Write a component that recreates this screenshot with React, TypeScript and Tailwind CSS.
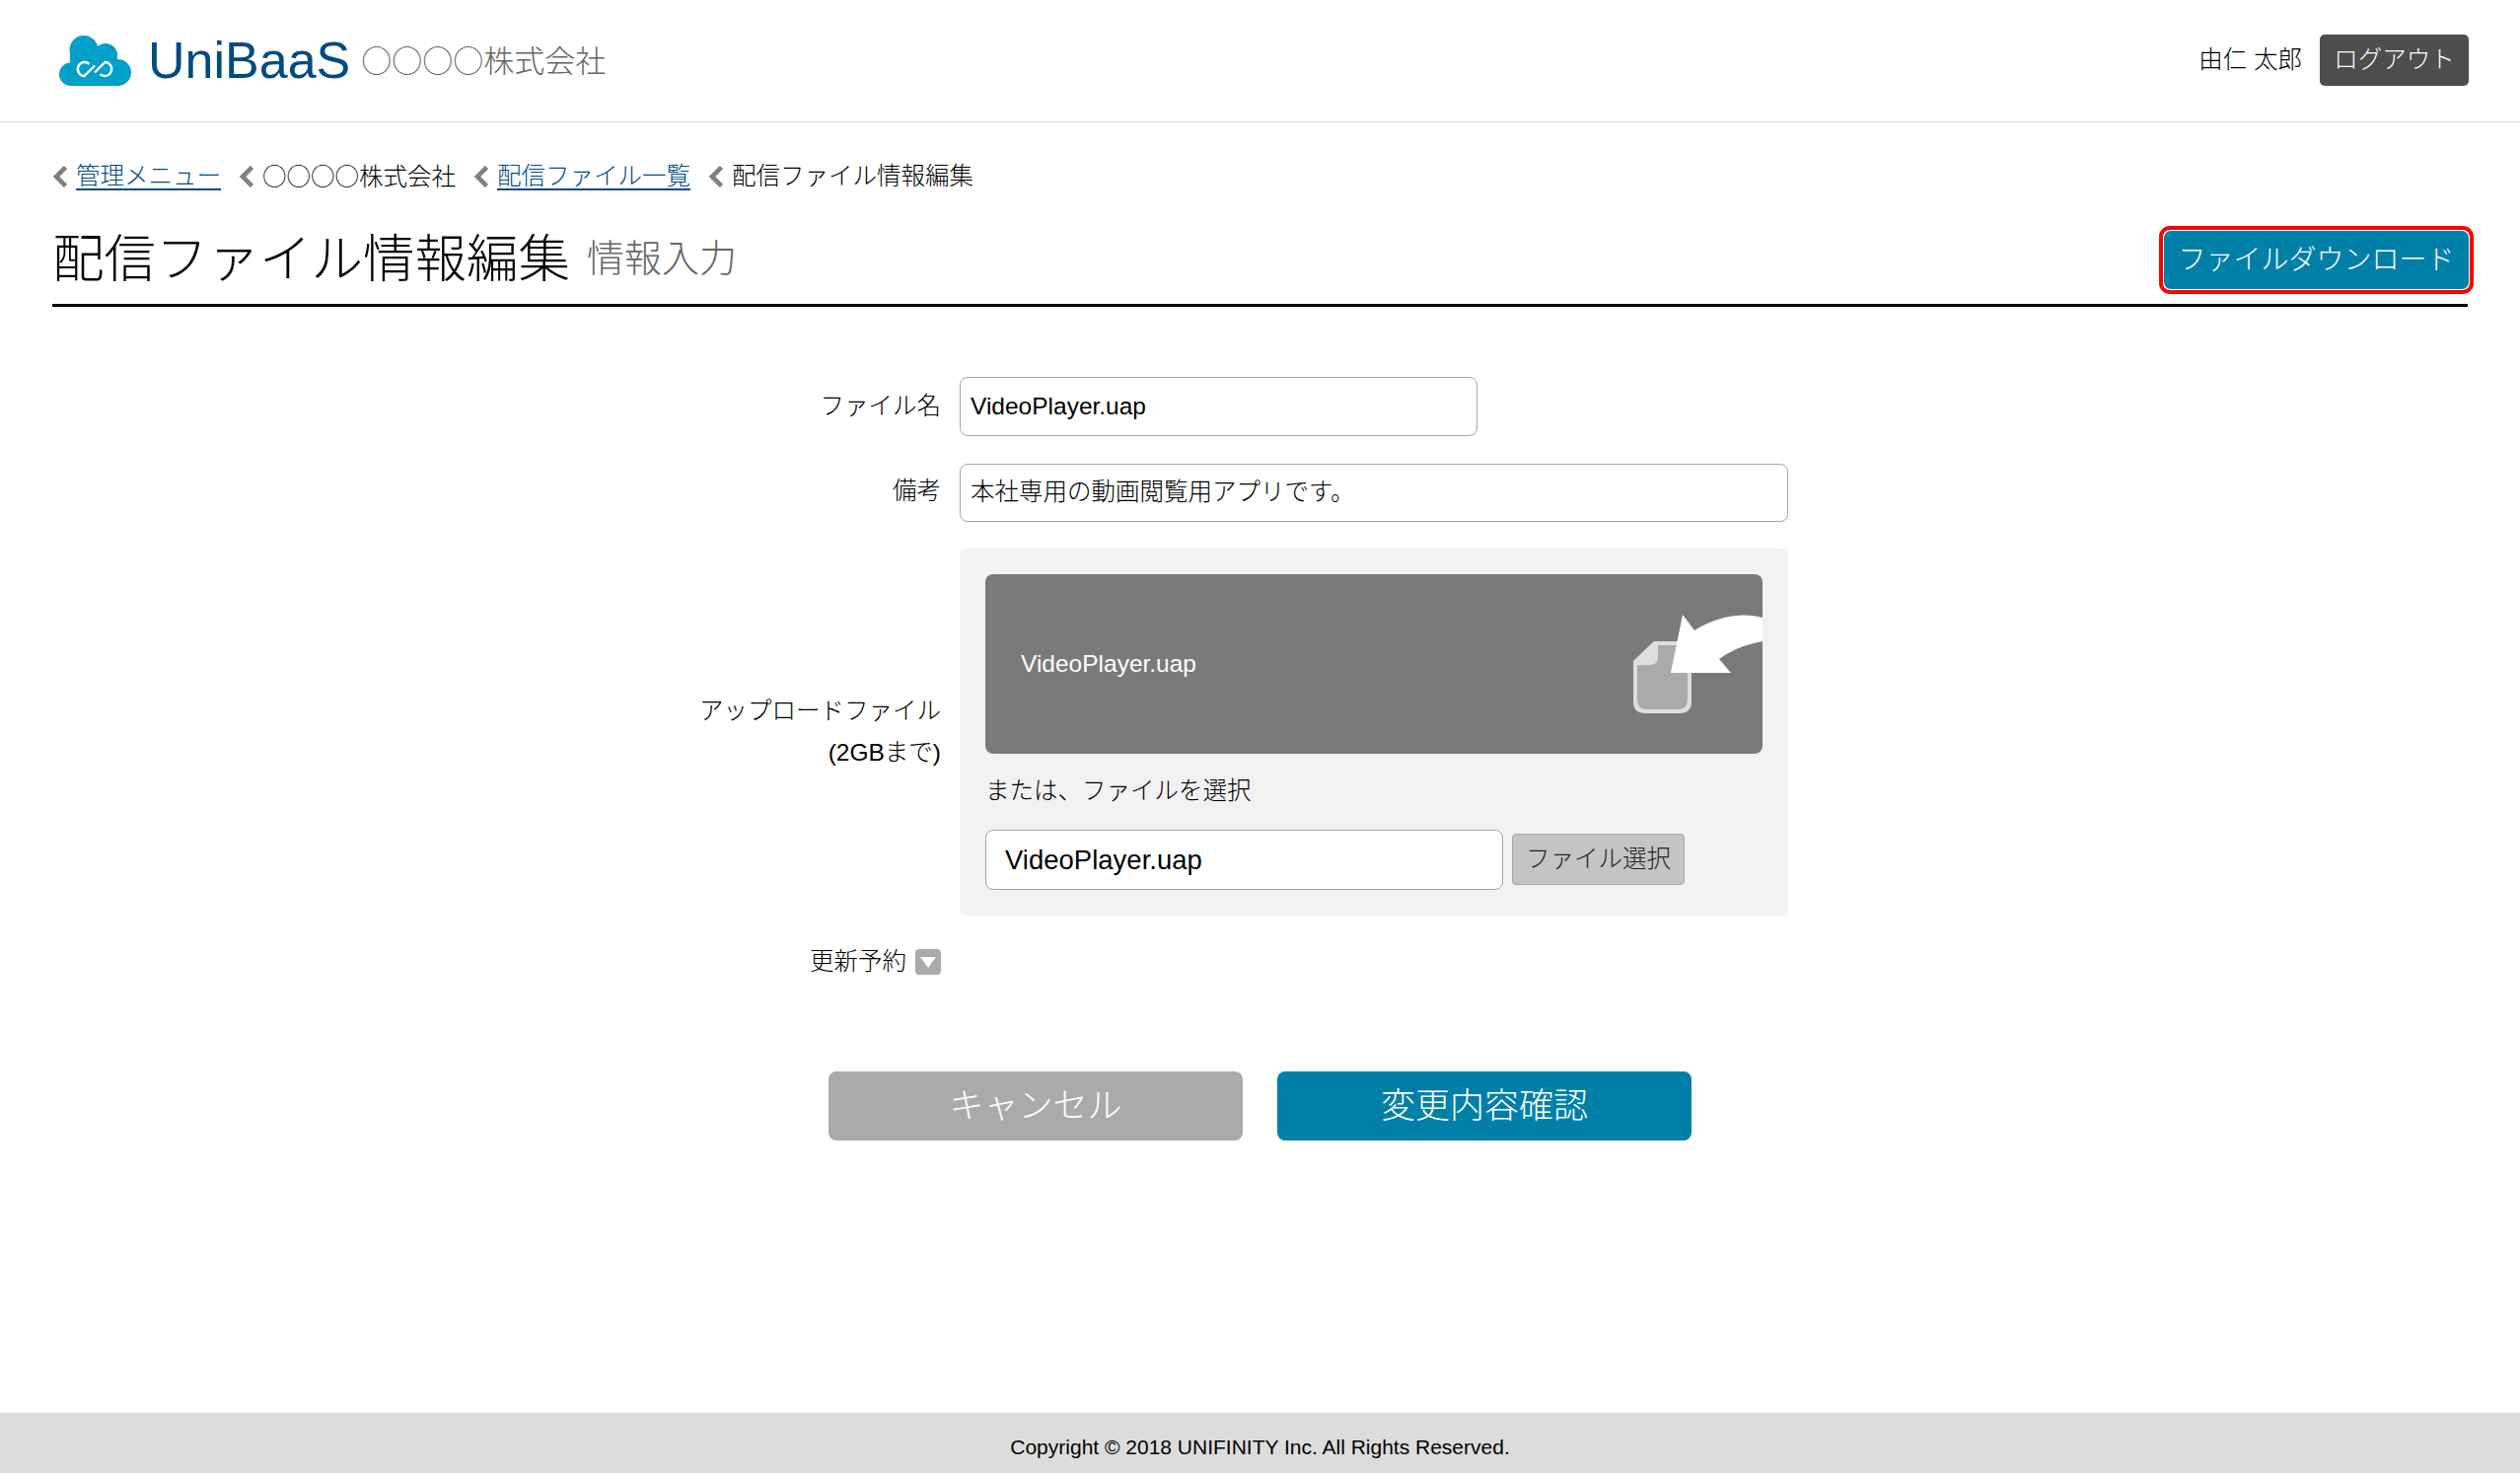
import React from "react";

const font = "font-['Liberation_Sans','Noto_Sans_CJK_JP',sans-serif]";
const cjk = "font-['Noto_Sans_CJK_JP',sans-serif]";

function Chevron() {
  return (
    <svg width="15" height="22" viewBox="0 0 15 22" className="shrink-0 mr-[9px]">
      <path d="M13.5 1.5 L4 11 L13.5 20.5" fill="none" stroke="#808080" strokeWidth="4.6" />
    </svg>
  );
}

function Crumb({ children, link }: { children: React.ReactNode; link?: boolean }) {
  return (
    <div className="flex items-center">
      <Chevron />
      {link ? (
        <a className="text-[#004b80] underline underline-offset-[4px]" href="#">
          {children}
        </a>
      ) : (
        <span>{children}</span>
      )}
    </div>
  );
}

function Label({ children }: { children: React.ReactNode }) {
  return <div className="text-right text-[24.5px] leading-[42px] text-black">{children}</div>;
}

function Logo() {
  return (
    <svg width="73" height="51" viewBox="0 0 73 51" className="shrink-0">
      <g fill="#00a0c8">
        <circle cx="25" cy="14.5" r="14.5" />
        <circle cx="47" cy="20" r="12" />
        <circle cx="59.5" cy="37.5" r="13.5" />
        <circle cx="11.7" cy="39.3" r="11.7" />
        <rect x="11" y="18" width="48" height="33" />
      </g>
      <g fill="none" stroke="#ffffff" strokeWidth="2.4">
        <path d="M30.5 28.8 A7 7 0 1 0 25.5 41 L36 30.5" />
        <path d="M41.5 39.2 A7 7 0 1 0 46.5 27 L36 37.5" />
      </g>
    </svg>
  );
}

function DropIcon() {
  return (
    <svg width="131" height="100" viewBox="0 0 131 100" className="shrink-0">
      <path d="M20.7 27 H48 Q59 27 59 38 V88 Q59 100 47 100 H12 Q0 100 0 88 V47 Z" fill="#dedede" />
      <path d="M25 31 H48 Q55 31 55 38 V86 Q55 96 45 96 H14 Q4 96 4 86 V51 H17 Q25 51 25 43 Z" fill="#aaaaaa" />
      <path d="M50 0 L38 59 H99 L87 45 Q104 32 131 27 V3 Q110 -2 92 3 Q74 8 62 16 Z" fill="#ffffff" />
    </svg>
  );
}

export default function App() {
  return (
    <div className={`${font} flex h-[1493px] flex-col bg-white font-light text-black`}>
      <header className="flex h-[124px] shrink-0 items-center justify-between border-b border-[#dddddd] pl-[60px] pr-[52px]">
        <div className="flex items-center">
          <Logo />
          <span className="mb-[2px] ml-[17px] text-[52px] leading-none text-[#004b80]">UniBaaS</span>
          <span className="mb-[2px] ml-[11px] text-[31px] leading-none text-[#666666]">
            <span className={cjk}>○○○○</span>株式会社
          </span>
        </div>
        <div className="flex items-center">
          <span className="text-[24.5px]">由仁 太郎</span>
          <button className="mb-[1px] ml-[18px] h-[52px] w-[151px] rounded-[5px] bg-[#4d4d4d] text-[24.5px] text-white">
            ログアウト
          </button>
        </div>
      </header>

      <main className="flex-1 px-[53px] pt-[40px]">
        <nav className="flex h-[30px] items-center gap-[18px] text-[24.5px]">
          <Crumb link>管理メニュー</Crumb>
          <Crumb>
            <span className={cjk}>○○○○</span>株式会社
          </Crumb>
          <Crumb link>配信ファイル一覧</Crumb>
          <Crumb>配信ファイル情報編集</Crumb>
        </nav>

        <div className="mt-[35px] flex items-center justify-between border-b-[3px] border-black pb-[10px]">
          <h1 className="flex -translate-y-[1px] items-center">
            <span className="text-[52.5px] leading-[69px]">配信ファイル情報編集</span>
            <span className="ml-[17px] text-[38px] text-[#666666]">情報入力</span>
          </h1>
          <div className="-mr-[6px] h-[69px] w-[319px] rounded-[11px] border-[4px] border-[#ff0000] bg-white p-px">
            <button className="h-full w-full rounded-[7px] bg-[#0080a8] text-[28px] text-white">
              ファイルダウンロード
            </button>
          </div>
        </div>

        <div className="mt-[71px] grid grid-cols-[901px_840px] gap-x-[19px]">
          <div className="self-center"><Label>ファイル名</Label></div>
          <div className="flex h-[60px] w-[525px] items-center rounded-[8px] border border-[#a6a6a6] px-[10px] text-[24.5px]">
            VideoPlayer.uap
          </div>

          <div className="mt-[27px] -translate-y-[1px] self-center"><Label>備考</Label></div>
          <div className="mt-[28px] flex h-[59px] items-center rounded-[8px] border border-[#a6a6a6] px-[10px] text-[24.5px]">
            本社専用の動画閲覧用アプリです。
          </div>

          <div className="mt-[27px] self-center">
            <Label>アップロードファイル</Label>
            <Label>(2GBまで)</Label>
          </div>
          <div className="mt-[27px] h-[372px] rounded-[8px] bg-[#f2f2f2] px-[26px] pt-[26px]">
            <div className="flex h-[182px] items-center justify-between overflow-hidden rounded-[8px] bg-[#7a7a7a] pl-[36px] text-[24.5px] text-white">
              <span>VideoPlayer.uap</span>
              <DropIcon />
            </div>
            <div className="mt-[20px] text-[24.5px] leading-[36px]">または、ファイルを選択</div>
            <div className="mt-[21px] flex items-start">
              <div className="flex h-[61px] w-[525px] items-center rounded-[8px] border border-[#a6a6a6] bg-white px-[19px] text-[27.5px]">
                VideoPlayer.uap
              </div>
              <button className="ml-[9px] mt-[4px] h-[52px] w-[175px] rounded-[4px] border border-[#a6a6a6] bg-[#c4c4c4] text-[24.5px] text-[#222222]">
                ファイル選択
              </button>
            </div>
          </div>

          <div className="mt-[34px] flex h-[26px] items-center justify-end">
            <span className="text-[24.5px] leading-none">更新予約</span>
            <button className="ml-[9px] flex h-[26px] w-[26px] items-center justify-center rounded-[4px] bg-[#aaaaaa]">
              <svg width="16" height="16" viewBox="0 0 16 16">
                <path d="M0 3 H16 L8 14 Z" fill="#ffffff" />
              </svg>
            </button>
          </div>
          <div />
        </div>

        <div className="mt-[98px] flex justify-center gap-[35px]">
          <button className="h-[70px] w-[420px] rounded-[8px] bg-[#aaaaaa] text-[35px] text-white">キャンセル</button>
          <button className="h-[70px] w-[420px] rounded-[8px] bg-[#0080a8] text-[35px] text-white">変更内容確認</button>
        </div>
      </main>

      <footer className="flex h-[61px] shrink-0 items-center justify-center bg-[#dcdcdc] pt-[9px] text-[21px] text-black">
        Copyright © 2018 UNIFINITY Inc. All Rights Reserved.
      </footer>
    </div>
  );
}
